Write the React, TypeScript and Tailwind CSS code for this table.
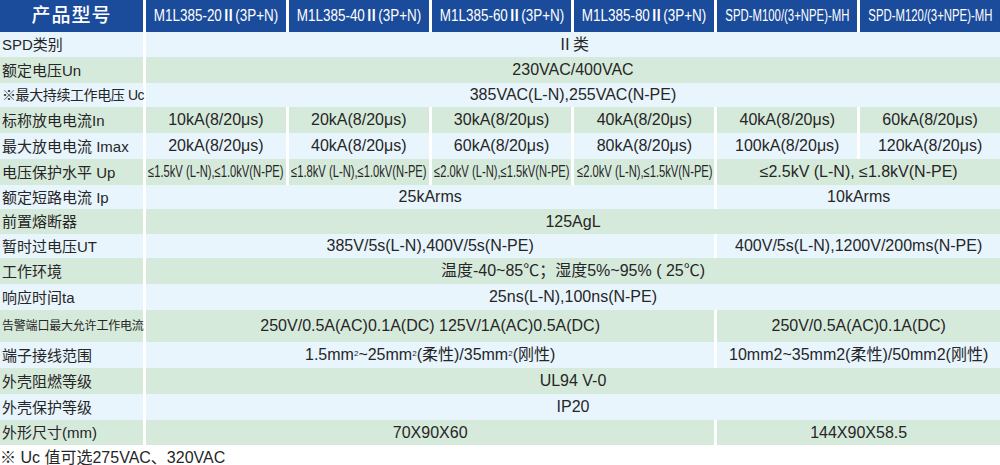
const fontStack = { fontFamily: '"Liberation Sans", "Noto Sans CJK SC", sans-serif' };

type Cell = { text: React.ReactNode; span: 1 | 2 | 4 | 6; squeeze?: boolean };
type Row = { label: React.ReactNode; labelClass?: string; cells: Cell[] };

const spanClass: Record<number, string> = {
  1: "",
  2: "col-span-2",
  4: "col-span-4",
  6: "col-span-6",
};

const pulse = (n: string): Cell => ({ text: `${n}kA(8/20μs)`, span: 1 });

const rows: Row[] = [
  { label: "SPD类别", cells: [{ text: "Ⅱ类", span: 6 }] },
  { label: "额定电压Un", cells: [{ text: "230VAC/400VAC", span: 6 }] },
  {
    label: "※最大持续工作电压 Uc",
    labelClass: "text-[14px] tracking-[-0.4px]",
    cells: [{ text: "385VAC(L-N),255VAC(N-PE)", span: 6 }],
  },
  { label: "标称放电电流In", cells: ["10", "20", "30", "40", "40", "60"].map(pulse) },
  { label: "最大放电电流 Imax", cells: ["20", "40", "60", "80", "100", "120"].map(pulse) },
  {
    label: "电压保护水平 Up",
    cells: [
      { text: "≤1.5kV (L-N),≤1.0kV(N-PE)", span: 1, squeeze: true },
      { text: "≤1.8kV (L-N),≤1.0kV(N-PE)", span: 1, squeeze: true },
      { text: "≤2.0kV (L-N),≤1.5kV(N-PE)", span: 1, squeeze: true },
      { text: "≤2.0kV (L-N),≤1.5kV(N-PE)", span: 1, squeeze: true },
      { text: "≤2.5kV (L-N), ≤1.8kV(N-PE)", span: 2 },
    ],
  },
  {
    label: "额定短路电流 Ip",
    cells: [
      { text: "25kArms", span: 4 },
      { text: "10kArms", span: 2 },
    ],
  },
  { label: "前置熔断器", cells: [{ text: "125AgL", span: 6 }] },
  {
    label: "暂时过电压UT",
    cells: [
      { text: "385V/5s(L-N),400V/5s(N-PE)", span: 4 },
      { text: "400V/5s(L-N),1200V/200ms(N-PE)", span: 2 },
    ],
  },
  { label: "工作环境", cells: [{ text: "温度-40~85℃；湿度5%~95% ( 25℃)", span: 6 }] },
  { label: "响应时间ta", cells: [{ text: "25ns(L-N),100ns(N-PE)", span: 6 }] },
  {
    label: "告警端口最大允许工作电流",
    labelClass: "text-[12px] tracking-[-0.2px]",
    cells: [
      { text: "250V/0.5A(AC)0.1A(DC) 125V/1A(AC)0.5A(DC)", span: 4 },
      { text: "250V/0.5A(AC)0.1A(DC)", span: 2 },
    ],
  },
  {
    label: "端子接线范围",
    cells: [
      {
        text: (
          <>
            1.5mm<sup className="text-[8px]">2</sup>~25mm<sup className="text-[8px]">2</sup>(柔性)/35mm
            <sup className="text-[8px]">2</sup>(刚性)
          </>
        ),
        span: 4,
      },
      { text: "10mm2~35mm2(柔性)/50mm2(刚性)", span: 2 },
    ],
  },
  { label: "外壳阻燃等级", cells: [{ text: "UL94 V-0", span: 6 }] },
  { label: "外壳保护等级", cells: [{ text: "IP20", span: 6 }] },
  {
    label: "外形尺寸(mm)",
    cells: [
      { text: "70X90X60", span: 4 },
      { text: "144X90X58.5", span: 2 },
    ],
  },
];

// M1L models carry a bold roman numeral between the rating and the pole config
const models = [
  { pre: "M1L385-20", mark: "Ⅱ", post: "(3P+N)", narrow: false },
  { pre: "M1L385-40", mark: "Ⅱ", post: "(3P+N)", narrow: false },
  { pre: "M1L385-60", mark: "Ⅱ", post: "(3P+N)", narrow: false },
  { pre: "M1L385-80", mark: "Ⅱ", post: "(3P+N)", narrow: false },
  { pre: "SPD-M100/(3+NPE)-MH", mark: "", post: "", narrow: true },
  { pre: "SPD-M120/(3+NPE)-MH", mark: "", post: "", narrow: true },
];

export default function App() {
  return (
    <div className="w-[1000px] h-[465px] overflow-hidden bg-white text-[#262626]" style={fontStack}>
      <div className="grid grid-cols-[143px_repeat(6,minmax(0,1fr))] grid-rows-[32px_25px_26px_24px_26px_26px_26px_24px_25px_24px_26px_26px_32px_26px_26px_26px_25px] gap-x-[3px]">
        {/* header */}
        <div className="flex items-center justify-center bg-[#1b4b9b] text-[19px] font-medium tracking-[1px] text-white">
          产品型号
        </div>
        {models.map((m) => (
          <div key={m.pre} className="flex min-w-0 items-center justify-center bg-[#1b4b9b] text-white">
            <span
              className={
                m.narrow
                  ? "inline-block shrink-0 whitespace-nowrap text-[16px] scale-x-[0.71]"
                  : "inline-block shrink-0 whitespace-nowrap text-[16px] scale-x-[0.84]"
              }
            >
              {m.pre}
              {m.mark && <span className="font-bold">{m.mark}</span>}
              {m.post}
            </span>
          </div>
        ))}

        {rows.map((row, i) => {
          const tone = i % 2 === 0 ? "bg-[#e8f5fd]" : "bg-[#d6eadb]";
          return [
            <div
              key={`l${i}`}
              className={`flex min-w-0 items-center whitespace-nowrap pl-[2px] leading-none ${tone} ${row.labelClass ?? "text-[15px]"}`}
            >
              {row.label}
            </div>,
            ...row.cells.map((c, j) => (
              <div
                key={`c${i}-${j}`}
                className={`flex min-w-0 items-center justify-center whitespace-nowrap leading-none ${tone} ${spanClass[c.span]}`}
              >
                {c.squeeze ? (
                  <span className="inline-block shrink-0 text-[16px] scale-x-[0.7]">{c.text}</span>
                ) : (
                  <span className="text-[16px]">{c.text}</span>
                )}
              </div>
            )),
          ];
        })}
      </div>
      <div className="pt-[3px] text-[16px] leading-[20px]">※ Uc 值可选275VAC、320VAC</div>
    </div>
  );
}
